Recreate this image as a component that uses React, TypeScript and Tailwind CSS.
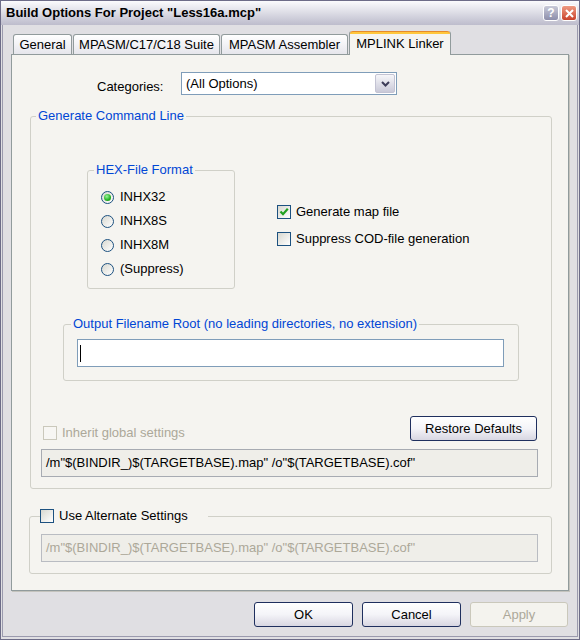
import { ReactNode } from 'react';
import clsx from 'clsx';

const Radio = ({ label, checked }: { label: string; checked?: boolean }) => (
  <div className="flex h-[24px] items-center gap-[6px]">
    <span className="flex h-[13px] w-[13px] items-center justify-center rounded-full border border-[#1c5180] bg-gradient-to-br from-[#d8d8d0] to-white">
      {checked && (
        <span className="h-[7px] w-[7px] rounded-full bg-[radial-gradient(circle_at_40%_35%,#9af59a,#22b022_60%,#168816)]" />
      )}
    </span>
    <span>{label}</span>
  </div>
);

const Check = ({ checked, disabled }: { checked?: boolean; disabled?: boolean }) => (
  <span
    className={clsx(
      'flex h-[14px] w-[14px] shrink-0 items-center justify-center border',
      disabled ? 'border-[#cac8bb] bg-[#f7f6f3]' : 'border-[#1c5180] bg-gradient-to-br from-[#d8d8d0] to-white'
    )}
  >
    {checked && (
      <svg width="10" height="10" viewBox="0 0 10 10">
        <path d="M1.5 4.5 L4 7.2 L8.8 1.8" stroke="#21a121" strokeWidth="2.2" fill="none" />
      </svg>
    )}
  </span>
);

const Btn = ({ children, className, disabled }: { children: ReactNode; className?: string; disabled?: boolean }) => (
  <button
    className={clsx(
      'h-[25px] rounded-[3px] border',
      disabled
        ? 'border-[#cac8bb] bg-[#f4f3ee] text-[#aca899]'
        : 'border-[#1f2f5e] bg-gradient-to-b from-white via-[#f4f4f8] to-[#d8d7e2] text-black',
      className
    )}
  >
    {children}
  </button>
);

const Tab = ({ label, w }: { label: string; w: string }) => (
  <div
    className={clsx(
      'mr-px flex h-[20px] items-center justify-center rounded-t-[3px] border border-b-0 border-[#919b9c] bg-gradient-to-b from-white to-[#e6e6ec]',
      w
    )}
  >
    {label}
  </div>
);

export default function App() {
  return (
    <div className="flex h-[640px] w-[580px] flex-col border border-[#6d6c88] bg-[#e0dfe3] font-['Liberation_Sans',Arial,sans-serif] text-[13px] leading-[16px] text-black">
      {/* title bar */}
      <div className="flex h-[24px] items-center bg-gradient-to-b from-[#fbfbfd] via-[#dcdce5] to-[#bdbccc] pl-[5px] pr-[2px]">
        <span className="flex-1 font-bold">Build Options For Project "Less16a.mcp"</span>
        <span className="flex h-[16px] w-[16px] items-center justify-center rounded-[3px] border border-white bg-gradient-to-b from-[#c9cad8] to-[#8d8eab] text-[12px] font-bold text-white">
          ?
        </span>
        <span className="ml-[2px] flex h-[16px] w-[16px] items-center justify-center rounded-[3px] border border-white bg-gradient-to-b from-[#ee9a82] to-[#c9402a]">
          <svg width="9" height="9" viewBox="0 0 9 9">
            <path d="M1 1 L8 8 M8 1 L1 8" stroke="white" strokeWidth="2" />
          </svg>
        </span>
      </div>

      {/* body */}
      <div className="mx-px mb-[2px] flex flex-1 flex-col border-x border-b border-[#9b9aae] pl-[8px] pr-[7px] pt-[6px]">
        <div className="flex h-[23px] items-end pl-[2px]">
          <Tab label="General" w="w-[59px]" />
          <Tab label="MPASM/C17/C18 Suite" w="w-[147px]" />
          <Tab label="MPASM Assembler" w="w-[127px]" />
          <div className="relative z-10 -mb-px flex h-[24px] w-[102px] flex-col rounded-t-[3px] border-x border-[#919b9c] bg-[#f5f4f0]">
            <div className="h-[3px] rounded-t-[3px] border-t border-[#e68b2c] bg-[#ffc73c]" />
            <div className="flex flex-1 items-center justify-center pb-[2px]">MPLINK Linker</div>
          </div>
        </div>

        {/* tab panel */}
        <div className="h-[537px] w-[558px] border border-[#919b9c] bg-[#f5f4f0] shadow-[1px_1px_0_#c4c3bd]">
          <div className="ml-[85px] mt-[17px] flex items-start">
            <span className="mt-[7px] w-[84px]">Categories:</span>
            <div className="flex h-[23px] w-[216px] items-center border border-[#7f9db9] bg-white pl-[4px] pr-px">
              <span className="flex-1">(All Options)</span>
              <span className="flex h-[19px] w-[20px] items-center justify-center rounded-[2px] border border-[#c3c3d3] bg-gradient-to-b from-[#f6f6f9] to-[#c9c9d8]">
                <svg width="9" height="6" viewBox="0 0 9 6">
                  <path d="M1 1 L4.5 4.5 L8 1" stroke="#3c3c58" strokeWidth="2" fill="none" />
                </svg>
              </span>
            </div>
          </div>

          {/* Generate Command Line */}
          <fieldset className="ml-[18px] mt-[13px] w-[522px] rounded-[3px] border border-[#d0d0c8]">
            <legend className="ml-[5px] px-[2px] text-[#0046d5]">Generate Command Line</legend>
            <div className="ml-[56px] mt-[38px] flex items-start">
              <fieldset className="w-[148px] rounded-[3px] border border-[#d0d0c8]">
                <legend className="ml-[6px] px-[2px] text-[#0046d5]">HEX-File Format</legend>
                <div className="pb-[7px] pl-[13px] pt-[7px]">
                  <Radio label="INHX32" checked />
                  <Radio label="INHX8S" />
                  <Radio label="INHX8M" />
                  <Radio label="(Suppress)" />
                </div>
              </fieldset>
              <div className="ml-[42px] mt-[42px] flex flex-col gap-[11px]">
                <div className="flex h-[16px] items-center gap-[5px]">
                  <Check checked />
                  <span>Generate map file</span>
                </div>
                <div className="flex h-[16px] items-center gap-[5px]">
                  <Check />
                  <span>Suppress COD-file generation</span>
                </div>
              </div>
            </div>

            <fieldset className="ml-[32px] mt-[27px] w-[456px] rounded-[3px] border border-[#d0d0c8]">
              <legend className="ml-[7px] px-[2px] text-[#0046d5]">
                Output Filename Root (no leading directories, no extension)
              </legend>
              <div className="pb-[13px] pl-[13px] pt-[7px]">
                <div className="flex h-[28px] w-[427px] items-center border border-[#7f9db9] bg-white pl-[2px]">
                  <span className="h-[17px] w-px bg-black" />
                </div>
              </div>
            </fieldset>

            <div className="px-[10px] pb-[11px] pr-[13px]">
              <div className="mt-[35px] flex items-end justify-between">
                <div className="ml-[2px] flex h-[16px] items-center gap-[5px] text-[#aca899]">
                  <Check disabled />
                  <span>Inherit global settings</span>
                </div>
                <Btn className="mr-px w-[127px]">Restore Defaults</Btn>
              </div>
              <div className="mt-[8px] flex h-[28px] items-center border border-[#a7abb2] bg-[#efeee9] pl-[4px]">
                /m"$(BINDIR_)$(TARGETBASE).map" /o"$(TARGETBASE).cof"
              </div>
            </div>
          </fieldset>

          {/* Use Alternate Settings */}
          <fieldset className="ml-[17px] mt-[19px] w-[523px] rounded-[3px] border border-[#d0d0c8]">
            <legend className="ml-[10px] flex items-center gap-[5px] pr-[20px]">
              <Check />
              <span>Use Alternate Settings</span>
            </legend>
            <div className="pb-[11px] pl-[11px] pt-[10px]">
              <div className="flex h-[28px] w-[497px] items-center border border-[#b9bcc2] bg-[#efeee9] pl-[4px] text-[#aca899]">
                /m"$(BINDIR_)$(TARGETBASE).map" /o"$(TARGETBASE).cof"
              </div>
            </div>
          </fieldset>
        </div>

        {/* dialog buttons */}
        <div className="mt-[11px] flex justify-end gap-[9px] pr-[2px]">
          <Btn className="w-[99px]">OK</Btn>
          <Btn className="w-[99px]">Cancel</Btn>
          <Btn className="w-[98px]" disabled>
            Apply
          </Btn>
        </div>
      </div>
    </div>
  );
}
